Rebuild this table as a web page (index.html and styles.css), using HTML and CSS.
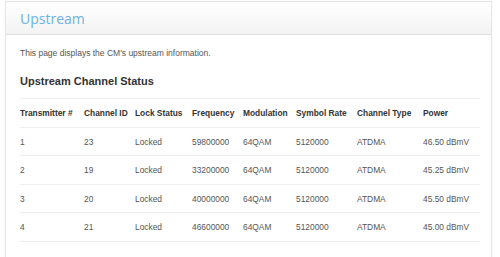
FILE: index.html
```html
<!DOCTYPE html>
<html lang="en">
<head>
    <meta charset="UTF-8">
    <title>Upstream</title>
    <link rel="stylesheet" href="styles.css">
</head>
<body>
    <div class="panel">
        <div class="panel-header">
            <h1>Upstream</h1>
        </div>
        <div class="panel-body">
            <p class="intro">This page displays the CM's upstream information.</p>
            <h2>Upstream Channel Status</h2>
            <table class="status-table">
                <thead>
                    <tr>
                        <th>Transmitter #</th>
                        <th>Channel ID</th>
                        <th>Lock Status</th>
                        <th>Frequency</th>
                        <th>Modulation</th>
                        <th>Symbol Rate</th>
                        <th>Channel Type</th>
                        <th>Power</th>
                    </tr>
                </thead>
                <tbody>
                    <tr>
                        <td>1</td><td>23</td><td>Locked</td><td>59800000</td><td>64QAM</td><td>5120000</td><td>ATDMA</td><td>46.50 dBmV</td>
                    </tr>
                    <tr>
                        <td>2</td><td>19</td><td>Locked</td><td>33200000</td><td>64QAM</td><td>5120000</td><td>ATDMA</td><td>45.25 dBmV</td>
                    </tr>
                    <tr>
                        <td>3</td><td>20</td><td>Locked</td><td>40000000</td><td>64QAM</td><td>5120000</td><td>ATDMA</td><td>45.50 dBmV</td>
                    </tr>
                    <tr>
                        <td>4</td><td>21</td><td>Locked</td><td>46600000</td><td>64QAM</td><td>5120000</td><td>ATDMA</td><td>45.00 dBmV</td>
                    </tr>
                </tbody>
            </table>
        </div>
    </div>
</body>
</html>
```

FILE: styles.css
```css
body {
    margin: 0;
    padding: 1px 0 0 5px;
    background-color: #ffffff;
    font-family: "Liberation Sans", Arial, sans-serif;
    color: #555555;
}
.panel {
    width: 485px;
    height: 260px;
    border: 1px solid #e6e6e6;
    border-bottom: none;
    box-shadow: 0 0 2px rgba(0, 0, 0, 0.06);
}
.panel-header {
    height: 32px;
    padding: 0 14px;
    background: linear-gradient(#ffffff, #f3f3f3);
    border-bottom: 1px solid #dddddd;
    display: flex;
    align-items: center;
}
.panel-header h1 {
    margin: 0;
    font-family: "Open Sans", sans-serif;
    font-size: 14px;
    font-weight: normal;
    color: #6fb1e3;
}
.panel-body {
    padding: 0 11px 0 14px;
}
.intro {
    margin: 12px 0 0;
    font-size: 8.5px;
    line-height: 12px;
    color: #555555;
}
.panel-body h2 {
    margin: 15px 0 0;
    font-size: 11px;
    line-height: 14px;
    color: #333333;
}
.status-table {
    width: 460px;
    margin-top: 10px;
    border-collapse: collapse;
    table-layout: fixed;
    font-size: 8.4px;
}
.status-table th,
.status-table td {
    text-align: left;
    padding: 8px 0 7.6px;
    line-height: 12px;
    border-top: 1px solid #eeeeee;
    white-space: nowrap;
}
.status-table th {
    color: #333333;
    font-weight: bold;
}
.status-table th:nth-child(1) { width: 64px; }
.status-table th:nth-child(2) { width: 51px; }
.status-table th:nth-child(3) { width: 57px; }
.status-table th:nth-child(4) { width: 51px; }
.status-table th:nth-child(5) { width: 53px; }
.status-table th:nth-child(6) { width: 61px; }
.status-table th:nth-child(7) { width: 66px; }
.status-table tbody tr:last-child td {
    border-bottom: 1px solid #eeeeee;
}
```
